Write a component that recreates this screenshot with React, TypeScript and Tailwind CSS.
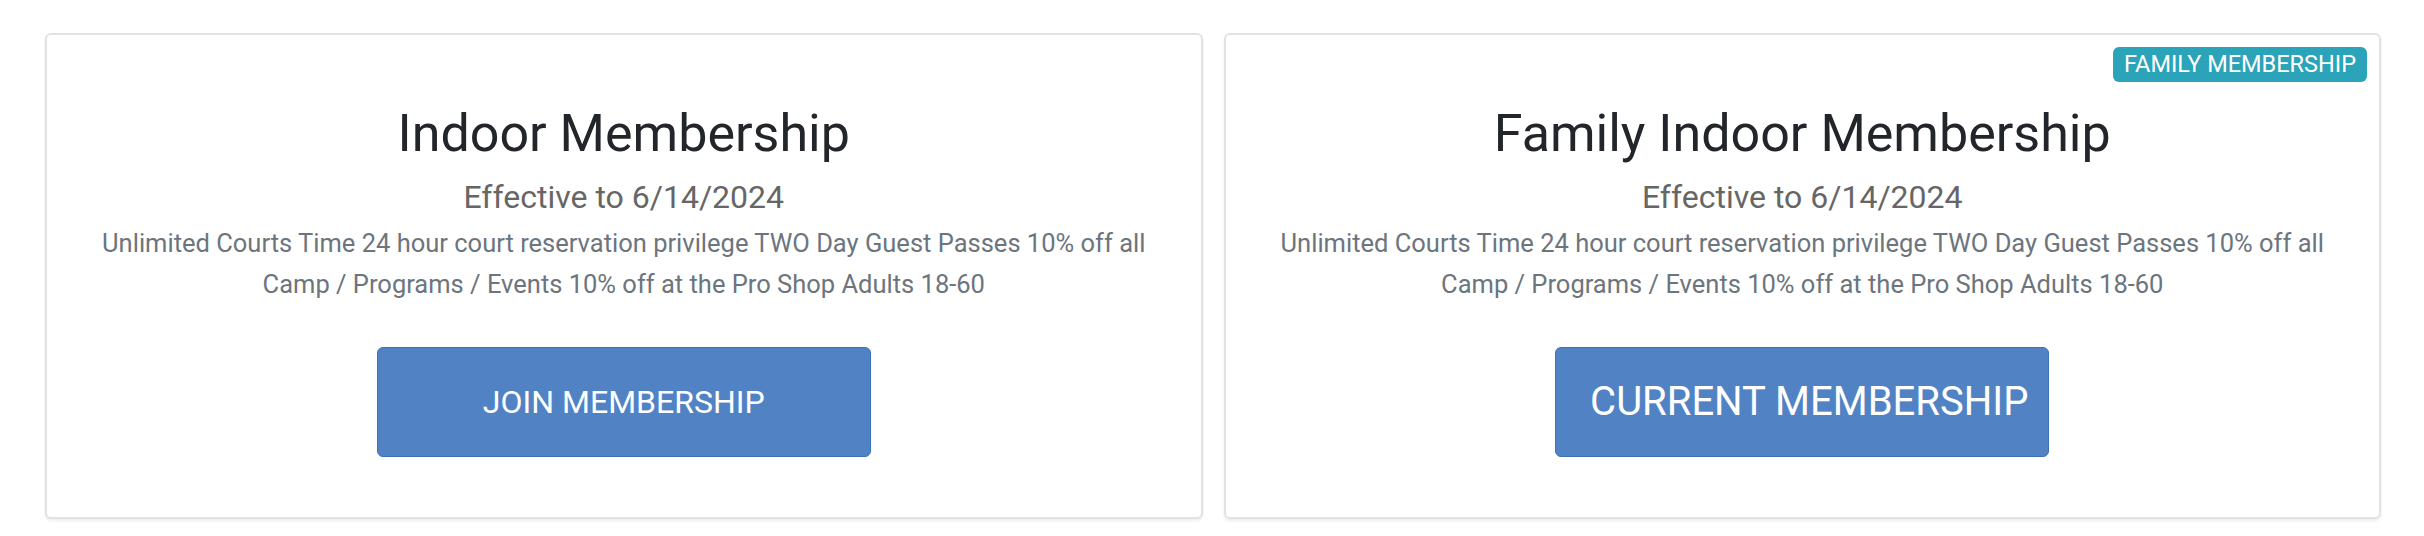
const PERKS =
  "Unlimited Courts Time 24 hour court reservation privilege TWO Day Guest Passes 10% off all Camp / Programs / Events 10% off at the Pro Shop Adults 18-60";

type Plan = {
  id: string;
  name: string;
  effective: string;
  perks: string;
  action: string;
  badge?: string;
  current?: boolean;
};

const PLANS: Plan[] = [
  { id: "indoor", name: "Indoor Membership", effective: "6/14/2024", perks: PERKS, action: "JOIN MEMBERSHIP" },
  {
    id: "family",
    name: "Family Indoor Membership",
    effective: "6/14/2024",
    perks: PERKS,
    action: "CURRENT MEMBERSHIP",
    badge: "FAMILY MEMBERSHIP",
    current: true,
  },
];

function PlanCard({ plan }: { plan: Plan }) {
  return (
    <div className="relative flex flex-1 flex-col items-center rounded-[6px] border-2 border-[#e2e2e2] bg-white px-[30px] pt-[68px] pb-[60px] text-center shadow-[0_2px_3px_rgba(0,0,0,0.08)]">
      {plan.badge && (
        <span className="absolute top-[12px] right-[12px] rounded-[6px] bg-[#2ba3b9] px-[11px] text-[23.5px] leading-[35px] text-white">
          {plan.badge}
        </span>
      )}
      <h2 className="text-[52px] leading-[1.2] font-normal text-[#222529]">{plan.name}</h2>
      <p className="mt-[13px] text-[32px] leading-[1.2] text-[#666666]">Effective to {plan.effective}</p>
      <p className="mt-[6px] text-[25.5px] leading-[41px] text-[#6c757d]">{plan.perks}</p>
      <button
        type="button"
        className={
          plan.current
            ? "mt-[42px] h-[110px] w-[494px] rounded-[6px] border border-[#3d71b7] bg-[#5183c4] pl-[14px] text-[40px] text-white"
            : "mt-[42px] h-[110px] w-[494px] rounded-[6px] border border-[#3d71b7] bg-[#5183c4] text-[32px] text-white"
        }
      >
        {plan.action}
      </button>
    </div>
  );
}

export default function App() {
  return (
    <div className="min-h-[536px] w-full bg-white font-['Roboto','Liberation_Sans',sans-serif]">
      <div className="flex gap-[21px] pt-[33px] pr-[43px] pl-[45px]">
        {PLANS.map((p) => (
          <PlanCard key={p.id} plan={p} />
        ))}
      </div>
    </div>
  );
}
